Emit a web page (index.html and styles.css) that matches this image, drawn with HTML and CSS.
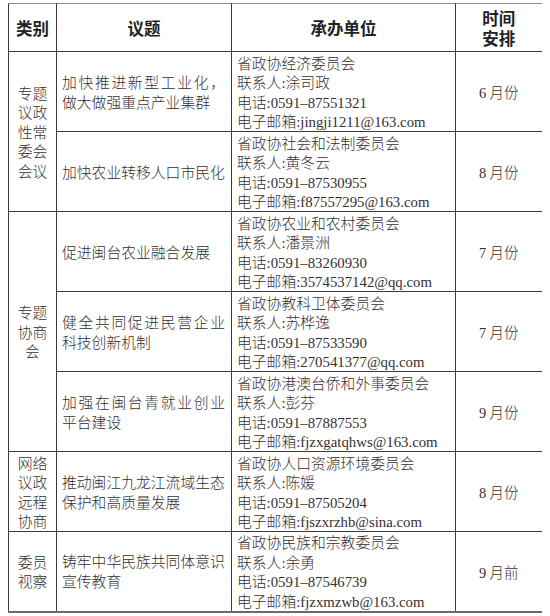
FILE: index.html
```html
<!DOCTYPE html>
<html lang="zh-CN">
<head>
<meta charset="utf-8">
<title>协商计划</title>
<link rel="stylesheet" href="styles.css">
</head>
<body>
<table class="plan">
  <colgroup>
    <col class="c-cat">
    <col class="c-topic">
    <col class="c-unit">
    <col class="c-time">
  </colgroup>
  <thead>
    <tr class="head">
      <th>类别</th>
      <th>议题</th>
      <th>承办单位</th>
      <th>时间<br>安排</th>
    </tr>
  </thead>
  <tbody>
    <tr>
      <td class="cat" rowspan="2">专题<br>议政<br>性常<br>委会<br>会议</td>
      <td class="topic"><span class="jl">加快推进新型工业化，</span>做大做强重点产业集群</td>
      <td class="unit">省政协经济委员会<br>联系人<span class="lt">:</span>涂司政<br>电话<span class="lt">:0591–87551321</span><br>电子邮箱<span class="lt">:jingji1211@163.com</span></td>
      <td class="time"><span class="lt">6</span> 月份</td>
    </tr>
    <tr>
      <td class="topic">加快农业转移人口市民化</td>
      <td class="unit">省政协社会和法制委员会<br>联系人<span class="lt">:</span>黄冬云<br>电话<span class="lt">:0591–87530955</span><br>电子邮箱<span class="lt">:f87557295@163.com</span></td>
      <td class="time"><span class="lt">8</span> 月份</td>
    </tr>
    <tr>
      <td class="cat" rowspan="3">专题<br>协商<br>会</td>
      <td class="topic">促进闽台农业融合发展</td>
      <td class="unit">省政协农业和农村委员会<br>联系人<span class="lt">:</span>潘景洲<br>电话<span class="lt">:0591–83260930</span><br>电子邮箱<span class="lt">:3574537142@qq.com</span></td>
      <td class="time"><span class="lt">7</span> 月份</td>
    </tr>
    <tr>
      <td class="topic"><span class="jl">健全共同促进民营企业</span>科技创新机制</td>
      <td class="unit">省政协教科卫体委员会<br>联系人<span class="lt">:</span>苏桦逸<br>电话<span class="lt">:0591–87533590</span><br>电子邮箱<span class="lt">:270541377@qq.com</span></td>
      <td class="time"><span class="lt">7</span> 月份</td>
    </tr>
    <tr>
      <td class="topic"><span class="jl">加强在闽台青就业创业</span>平台建设</td>
      <td class="unit">省政协港澳台侨和外事委员会<br>联系人<span class="lt">:</span>彭芬<br>电话<span class="lt">:0591–87887553</span><br>电子邮箱<span class="lt">:fjzxgatqhws@163.com</span></td>
      <td class="time"><span class="lt">9</span> 月份</td>
    </tr>
    <tr>
      <td class="cat">网络<br>议政<br>远程<br>协商</td>
      <td class="topic">推动闽江九龙江流域生态<br>保护和高质量发展</td>
      <td class="unit">省政协人口资源环境委员会<br>联系人<span class="lt">:</span>陈媛<br>电话<span class="lt">:0591–87505204</span><br>电子邮箱<span class="lt">:fjszxrzhb@sina.com</span></td>
      <td class="time"><span class="lt">8</span> 月份</td>
    </tr>
    <tr>
      <td class="cat">委员<br>视察</td>
      <td class="topic">铸牢中华民族共同体意识<br>宣传教育</td>
      <td class="unit">省政协民族和宗教委员会<br>联系人<span class="lt">:</span>余勇<br>电话<span class="lt">:0591–87546739</span><br>电子邮箱<span class="lt">:fjzxmzwb@163.com</span></td>
      <td class="time"><span class="lt">9</span> 月前</td>
    </tr>
  </tbody>
</table>
</body>
</html>
```

FILE: styles.css
```css
html, body {
  background: #ffffff;
}
body {
  margin: 3px 8px;
  font-family: "Noto Sans CJK SC", "Liberation Serif", serif;
  color: #352f2f;
}
.plan {
  border-collapse: collapse;
  table-layout: fixed;
  width: 534px;
}
.c-cat { width: 48px; }
.c-topic { width: 175px; }
.c-unit { width: 224px; }
.c-time { width: 87px; }

.plan th,
.plan td {
  border: 1px solid #3a3a3a;
  padding: 0;
  vertical-align: middle;
  white-space: nowrap;
  overflow: hidden;
}
.plan tr:last-child td {
  border-bottom: 2px solid #6a6a6a;
}
.plan th:last-child,
.plan td.time {
  border-right: 2px solid #3a3a3a;
}
.plan thead th {
  border-top: 1px solid #8a8a8a;
}
.head {
  height: 48px;
}
.head th {
  font-family: "Noto Sans CJK SC", sans-serif;
  font-weight: 700;
  font-size: 16.5px;
  line-height: 20px;
  color: #222222;
  text-align: center;
}
tbody tr {
  height: 80px;
}
.plan td {
  font-size: 14.8px;
  line-height: 19.5px;
  font-weight: 300;
}
.cat {
  text-align: center;
}
.topic {
  padding: 0 6px 0 5px !important;
  line-height: 20px !important;
}
.jl {
  display: block;
  text-align: justify;
  text-align-last: justify;
}
.unit {
  padding-left: 5px !important;
  line-height: 19.5px !important;
}
.time {
  text-align: center;
  font-size: 14.5px !important;
}
.lt {
  font-family: "Liberation Serif", "Noto Sans CJK SC", serif;
  font-weight: 400;
  line-height: 1;
}
```
